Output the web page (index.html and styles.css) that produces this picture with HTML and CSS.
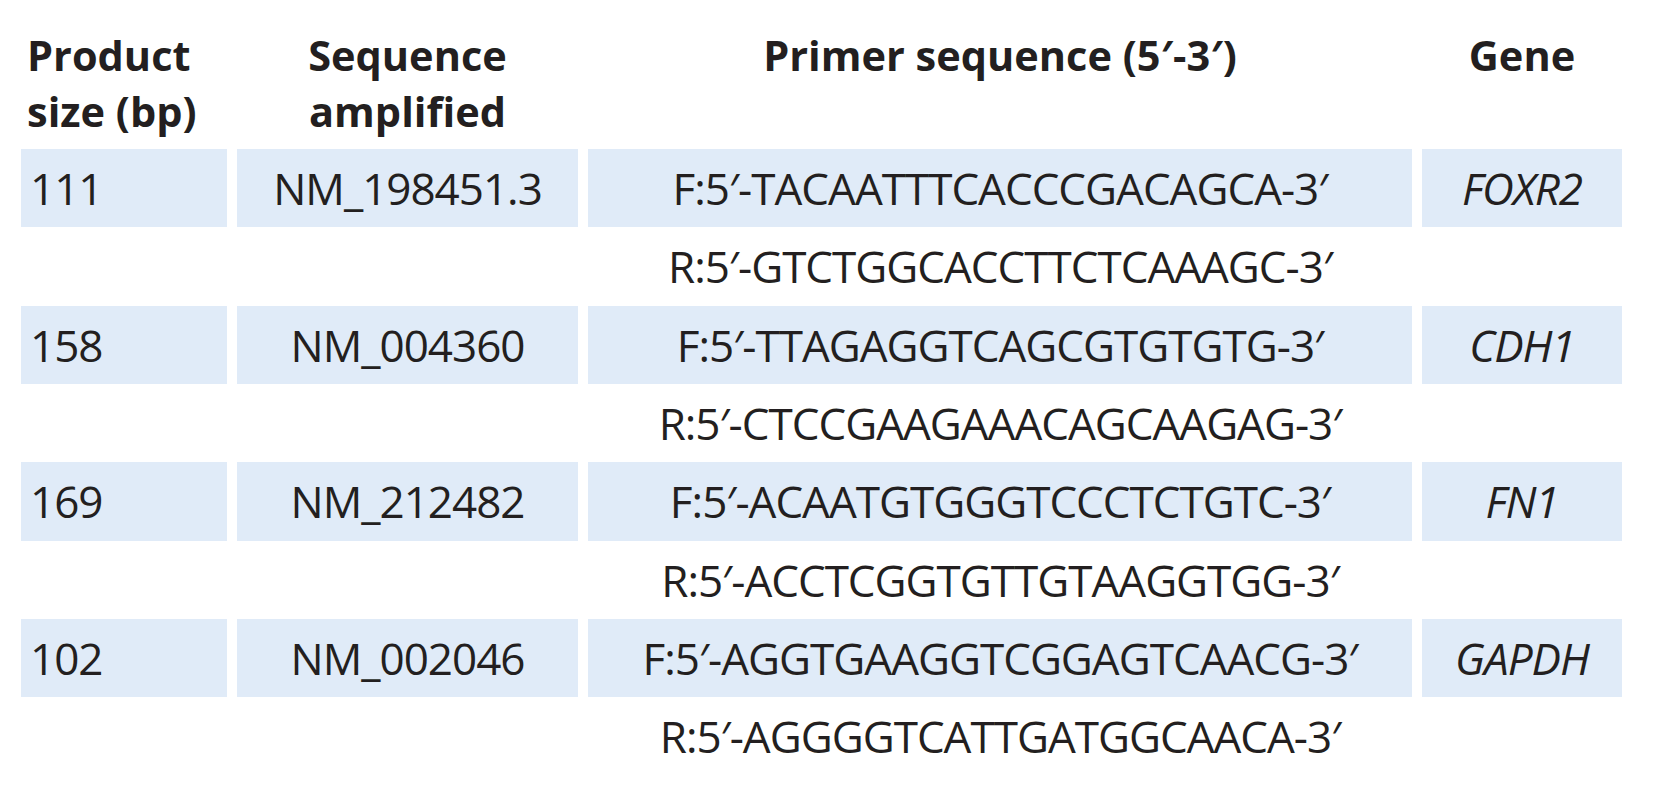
FILE: index.html
```html
<!DOCTYPE html>
<html lang="en">
<head>
<meta charset="utf-8">
<title>Primer table</title>
<link rel="stylesheet" href="styles.css">
</head>
<body>
<div class="primer-table">
  <div class="hd hd-size">Product<br>size (bp)</div>
  <div class="hd hd-center">Sequence<br>amplified</div>
  <div class="hd hd-center">Primer sequence (5′-3′)</div>
  <div class="hd hd-center">Gene</div>

  <div class="cell fill left">111</div>
  <div class="cell fill">NM_198451.3</div>
  <div class="cell fill">F:5′-TACAATTTCACCCGACAGCA-3′</div>
  <div class="cell fill gene">FOXR2</div>
  <div class="cell"></div>
  <div class="cell"></div>
  <div class="cell">R:5′-GTCTGGCACCTTCTCAAAGC-3′</div>
  <div class="cell"></div>

  <div class="cell fill left">158</div>
  <div class="cell fill">NM_004360</div>
  <div class="cell fill">F:5′-TTAGAGGTCAGCGTGTGTG-3′</div>
  <div class="cell fill gene">CDH1</div>
  <div class="cell"></div>
  <div class="cell"></div>
  <div class="cell">R:5′-CTCCGAAGAAACAGCAAGAG-3′</div>
  <div class="cell"></div>

  <div class="cell fill left">169</div>
  <div class="cell fill">NM_212482</div>
  <div class="cell fill">F:5′-ACAATGTGGGTCCCTCTGTC-3′</div>
  <div class="cell fill gene">FN1</div>
  <div class="cell"></div>
  <div class="cell"></div>
  <div class="cell">R:5′-ACCTCGGTGTTGTAAGGTGG-3′</div>
  <div class="cell"></div>

  <div class="cell fill left">102</div>
  <div class="cell fill">NM_002046</div>
  <div class="cell fill">F:5′-AGGTGAAGGTCGGAGTCAACG-3′</div>
  <div class="cell fill gene">GAPDH</div>
  <div class="cell"></div>
  <div class="cell"></div>
  <div class="cell">R:5′-AGGGGTCATTGATGGCAACA-3′</div>
  <div class="cell"></div>
</div>
</body>
</html>
```

FILE: styles.css
```css
html, body {
  margin: 0;
  padding: 0;
  background: #ffffff;
}

.primer-table {
  display: grid;
  grid-template-columns: 206px 341px 824px 200px;
  grid-template-rows: 149px;
  grid-auto-rows: 78.33px;
  column-gap: 10px;
  padding-left: 21px;
  font-family: "Open Sans", "Liberation Sans", sans-serif;
  color: #231f20;
}

.hd {
  font-weight: 700;
  font-size: 41.5px;
  line-height: 56px;
  padding-top: 27px;
}

.hd-size {
  padding-left: 6px;
}

.hd-center {
  text-align: center;
}

.cell {
  display: flex;
  align-items: center;
  justify-content: center;
  font-size: 44px;
  letter-spacing: -1px;
  white-space: nowrap;
}

.fill {
  background: #e0ebf8;
}

.left {
  justify-content: flex-start;
  padding-left: 9px;
}

.gene {
  font-style: italic;
}
```
